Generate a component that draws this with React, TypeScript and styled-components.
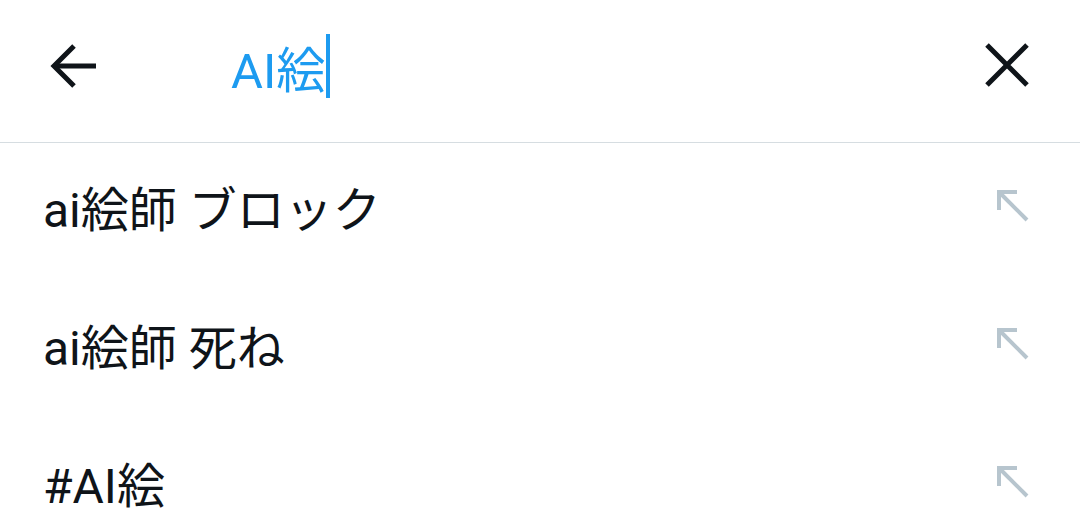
import React from 'react';
import styled, { createGlobalStyle } from 'styled-components';

const GlobalStyle = createGlobalStyle`
  html, body {
    margin: 0;
    padding: 0;
    background: #ffffff;
    font-family: Roboto, "Noto Sans CJK JP", sans-serif;
  }
  * { box-sizing: border-box; }
`;

const Page = styled.div`
  width: 1080px;
  height: 527px;
  overflow: hidden;
  background: #fff;
`;

const Header = styled.header`
  height: 143px;
  display: flex;
  align-items: center;
  padding: 0 49px 10px 50px;
  border-bottom: 1px solid #d6dde1;
`;

const IconButton = styled.button`
  width: 48px;
  height: 48px;
  padding: 0;
  border: none;
  background: none;
  display: flex;
  align-items: center;
  justify-content: center;
  color: #0f1419;
`;

const SearchField = styled.div`
  flex: 1;
  display: flex;
  align-items: center;
  padding-left: 133px;
  font-size: 49px;
  color: #1d9bf0;
`;

const Caret = styled.span`
  display: inline-block;
  width: 4px;
  height: 64px;
  background: #1d9bf0;
  margin-left: 1px;
`;

const List = styled.ul`
  list-style: none;
  margin: 0;
  padding: 0;
`;

const Row = styled.li`
  height: 138px;
  display: flex;
  align-items: center;
  justify-content: space-between;
  padding: 0 50px 0 43px;
  margin-top: -6px;
  margin-bottom: 6px;
`;

const RowText = styled.span`
  font-size: 48px;
  color: #0f1419;
`;

const BackIcon = () => (
  <svg width="48" height="48" viewBox="0 0 48 48" fill="none" stroke="currentColor" strokeWidth="5" strokeLinecap="butt">
    <path d="M4 24 H46" />
    <path d="M24 4 L4 24 L24 44" />
  </svg>
);

const CloseIcon = () => (
  <svg width="48" height="48" viewBox="0 0 48 48" fill="none" stroke="currentColor" strokeWidth="5">
    <path d="M4 3 L44 43 M44 3 L4 43" />
  </svg>
);

const FillIcon = () => (
  <svg width="34" height="34" viewBox="0 0 34 34" fill="none" stroke="#b7c5ce" strokeWidth="4">
    <path d="M3 3 L31 31" />
    <path d="M3 21 V3 H21" />
  </svg>
);

const suggestions = ['ai絵師 ブロック', 'ai絵師 死ね', '#AI絵'];

export default function App() {
  return (
    <Page>
      <GlobalStyle />
      <Header>
        <IconButton aria-label="戻る">
          <BackIcon />
        </IconButton>
        <SearchField>
          AI絵<Caret />
        </SearchField>
        <IconButton aria-label="クリア">
          <CloseIcon />
        </IconButton>
      </Header>
      <List>
        {suggestions.map((s) => (
          <Row key={s}>
            <RowText>{s}</RowText>
            <FillIcon />
          </Row>
        ))}
      </List>
    </Page>
  );
}
